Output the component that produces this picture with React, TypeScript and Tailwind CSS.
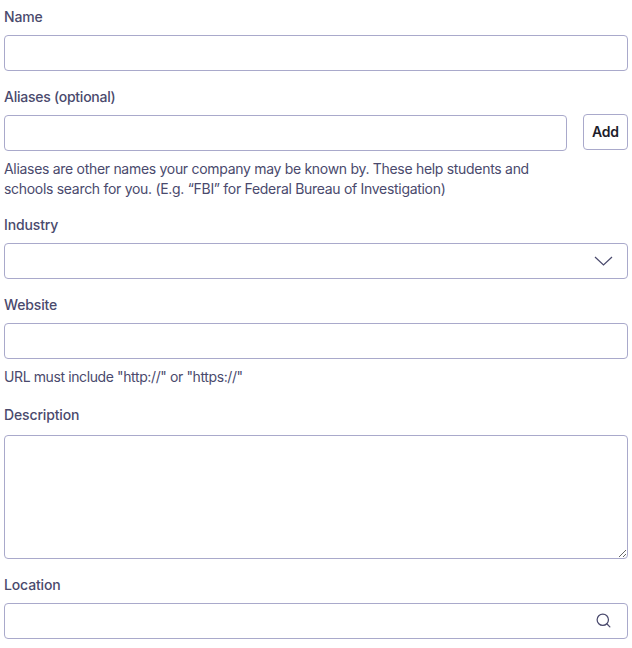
import { Search } from 'lucide-react';

const labelClass = 'block text-sm leading-5 font-medium tracking-[-0.14px] text-[#4a4a6d] mb-2';
const inputClass = 'block w-full h-9 rounded border border-[#a9a9cb] bg-white outline-none';
const helpClass = 'mt-2 text-sm leading-5 text-[#4a4a6d]';

export default function App() {
    return (
        <div className="w-[632px] h-[648px] overflow-hidden bg-white px-1 pt-[7px] font-['Inter',sans-serif]">
            <div className="mb-4">
                <label className={labelClass}>Name</label>
                <input className={inputClass} />
            </div>

            <div className="mb-4">
                <label className={`${labelClass} tracking-[-0.25px]`}>Aliases (optional)</label>
                <div className="flex items-start gap-4">
                    <input className={`${inputClass} flex-1 min-w-0`} />
                    <button className="w-[45px] h-9 -mt-px rounded border border-[#a9a9cb] bg-white text-sm font-semibold tracking-[-0.2px] text-[#1d1d2b]">
                        Add
                    </button>
                </div>
                <p className={`${helpClass} w-[540px] tracking-[-0.3px]`}>
                    Aliases are other names your company may be known by. These help students and schools search for you. (E.g. “FBI” for Federal Bureau of Investigation)
                </p>
            </div>

            <div className="mb-4">
                <label className={labelClass}>Industry</label>
                <div className="relative">
                    <div className={inputClass} />
                    <svg className="absolute right-[15px] top-[13px]" width="19" height="10" viewBox="0 0 19 10" fill="none" stroke="#4a4a6d" strokeWidth="1.25">
                        <path d="M1 1l8.5 8L18 1" />
                    </svg>
                </div>
            </div>

            <div className="mb-[18px]">
                <label className={labelClass}>Website</label>
                <input className={inputClass} />
                <p className={`${helpClass} tracking-[-0.39px]`}>URL must include "http://" or "https://"</p>
            </div>

            <div className="mb-4">
                <label className={`${labelClass} !mb-2.5`}>Description</label>
                <textarea className="block w-full h-[124px] rounded border border-[#a9a9cb] bg-white outline-none" />
            </div>

            <div>
                <label className={labelClass}>Location</label>
                <div className="relative">
                    <input className={inputClass} />
                    <Search className="absolute right-[16px] top-[9px] w-[17px] h-[17px] text-[#4a4a6d]" strokeWidth={1.75} />
                </div>
            </div>
        </div>
    );
}
